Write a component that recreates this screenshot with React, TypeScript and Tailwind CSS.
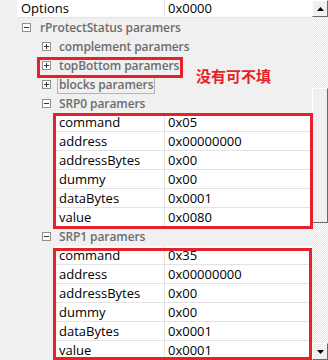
import React from "react";

const font = { fontFamily: '"Open Sans", "Noto Sans", sans-serif' };

function Toggle({ open }: { open: boolean }) {
  return (
    <span className="relative box-border flex h-[9px] w-[9px] items-center justify-center border border-[#919191] bg-white">
      <span className="absolute h-px w-[5px] bg-[#333]" />
      {!open && <span className="absolute h-[5px] w-px bg-[#333]" />}
    </span>
  );
}

function Category({
  boxX,
  textX,
  open,
  label,
  focus,
}: {
  boxX: number;
  textX: number;
  open: boolean;
  label: string;
  focus?: boolean;
}) {
  return (
    <div className="relative h-[19px] shrink-0 text-[12px] font-semibold tracking-[-0.1px] text-[#6d6d6d]">
      <div className="absolute top-[5px]" style={{ left: boxX }}>
        <Toggle open={open} />
      </div>
      <div
        className={
          "absolute top-0 flex h-[19px] items-center leading-none " +
          (focus ? "border border-[#b4b4b4] pr-[1px] pl-[1px]" : "")
        }
        style={{ left: focus ? textX - 2 : textX }}
      >
        {label}
      </div>
    </div>
  );
}

function Prop({
  indent,
  label,
  value,
  h = "h-[19px]",
}: {
  indent: number;
  label: string;
  value: string;
  h?: string;
}) {
  return (
    <div className={"flex shrink-0 text-[13px] text-black " + h}>
      <div className="shrink-0" style={{ width: indent }} />
      <div className="flex flex-1 border-b border-[#e3e3e3] bg-white">
        <div
          className="flex shrink-0 items-center border-r border-[#e3e3e3] pl-[4px] leading-none"
          style={{ width: 165 - indent }}
        >
          {label}
        </div>
        <div className="flex flex-1 items-center pl-[3px] leading-none">{value}</div>
      </div>
    </div>
  );
}

const srp = (v: [string, string, string, string, string, string]) => [
  ["command", v[0]],
  ["address", v[1]],
  ["addressBytes", v[2]],
  ["dummy", v[3]],
  ["dataBytes", v[4]],
  ["value", v[5]],
];

function Arrow({ up }: { up: boolean }) {
  return (
    <div className="box-border flex h-[17px] w-4 items-center justify-center border border-t-white border-l-white border-r-[#696969] border-b-[#696969] bg-[#f0f0f0]">
      <svg width="7" height="4" viewBox="0 0 7 4">
        <path d={up ? "M0 4 L3.5 0 L7 4 Z" : "M0 0 L3.5 4 L7 0 Z"} fill="#000" />
      </svg>
    </div>
  );
}

export default function App() {
  return (
    <div className="relative flex h-[360px] w-[328px] overflow-hidden bg-[#f0f0f0]" style={font}>
      <div className="flex w-[312px] flex-col">
        <Prop indent={17} label="Options" value="0x0000" h="h-[18px]" />
        <Category boxX={22} textX={40} open label="rProtectStatus paramers" />
        <Category boxX={42} textX={59} open={false} label="complement paramers" />
        <Category boxX={42} textX={59} open={false} label="topBottom paramers" />
        <Category boxX={42} textX={59} open={false} label="blocks paramers" focus />
        <Category boxX={42} textX={59} open label="SRP0 paramers" />
        {srp(["0x05", "0x00000000", "0x00", "0x00", "0x0001", "0x0080"]).map(([l, v]) => (
          <Prop key={"a" + l} indent={55} label={l} value={v} />
        ))}
        <Category boxX={42} textX={59} open label="SRP1 paramers" />
        {srp(["0x35", "0x00000000", "0x00", "0x00", "0x0001", "0x0001"]).map(([l, v]) => (
          <Prop key={"b" + l} indent={55} label={l} value={v} />
        ))}
      </div>

      {/* scrollbar */}
      <div className="flex w-4 flex-col bg-[repeating-conic-gradient(#e3e3e3_0_25%,#fff_0_50%)] bg-[length:2px_2px]">
        <Arrow up />
        <div className="h-[71px] shrink-0" />
        <div className="box-border h-[135px] shrink-0 border border-t-white border-l-white border-r-[#696969] border-b-[#696969] bg-[#f0f0f0]" />
        <div className="flex-1" />
        <Arrow up={false} />
      </div>

      {/* annotations */}
      <div className="absolute top-[57px] left-[37px] h-[21px] w-[146px] border-[3px] border-[#e8202a]" />
      <div className="absolute top-[113px] left-[53px] h-[116px] w-[260px] border-[3px] border-[#e8202a]" />
      <div className="absolute top-[248px] left-[53px] h-[112px] w-[259px] border-[3px] border-[#e8202a]" />
      <div
        className="absolute top-[67px] left-[196px] text-[15px] font-bold leading-[18px] text-[#e8202a]"
        style={{ fontFamily: '"Noto Sans CJK SC", sans-serif' }}
      >
        没有可不填
      </div>
    </div>
  );
}
